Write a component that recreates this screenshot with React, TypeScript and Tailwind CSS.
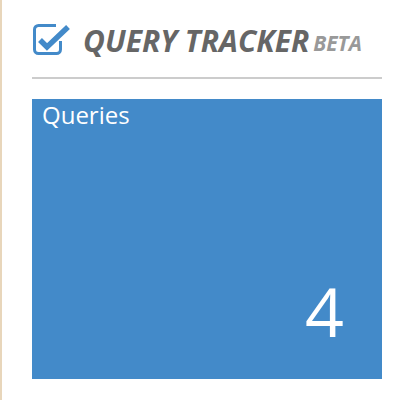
import React from "react";

function CheckIcon() {
  return (
    <svg width="40" height="36" viewBox="0 0 40 36" fill="none" className="shrink-0">
      <path
        d="M24 3.5H6.5a4 4 0 0 0-4 4V27.5a4 4 0 0 0 4 4H24.5a4 4 0 0 0 4-4V19"
        stroke="#438ac9"
        strokeWidth="3"
      />
      <path d="M8 18L15 25L36 5" stroke="#438ac9" strokeWidth="5.5" strokeLinejoin="miter" />
    </svg>
  );
}

export default function App() {
  return (
    <div className="h-[400px] w-[412px] border-l-2 border-[#e8d6bb] bg-white font-['Open_Sans',sans-serif]">
      <div className="ml-[30px] w-[350px] pt-[22px]">
        <header className="flex items-end border-b-2 border-[#cccccc] pb-[19px]">
          <CheckIcon />
          <h1 className="ml-[11px] text-[30px] leading-[34px] font-bold italic text-[#666666]">
            QUERY TRACKER
          </h1>
          <span className="ml-[4px] pb-[2px] text-[21px] leading-[26px] font-bold italic text-[#999999]">
            BETA
          </span>
        </header>

        <section className="mt-[20px] flex h-[280px] flex-col bg-[#438ac9] text-white">
          <h2 className="px-[10px] text-[24px] leading-[32px]">Queries</h2>
          <div className="mt-auto flex justify-end pr-[38px] pb-[34px]">
            <span className="text-[68px] leading-[68px] font-normal">4</span>
          </div>
        </section>
      </div>
    </div>
  );
}
